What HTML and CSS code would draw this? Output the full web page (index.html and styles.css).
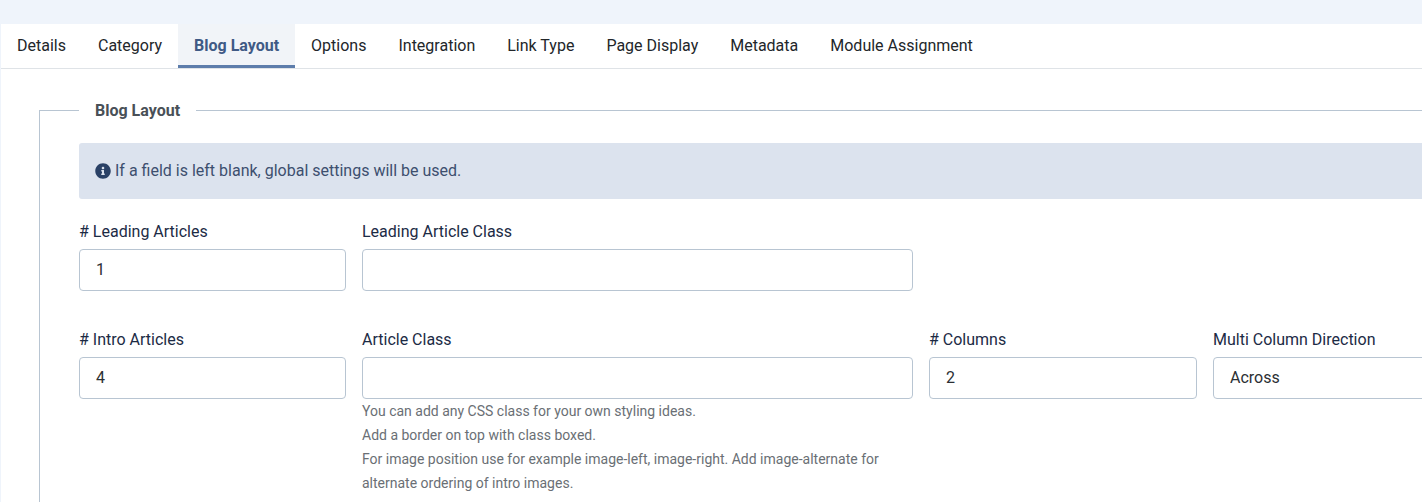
FILE: index.html
```html
<!DOCTYPE html>
<html lang="en">
<head>
<meta charset="utf-8">
<title>Blog Layout</title>
<link rel="stylesheet" href="styles.css">
</head>
<body>
<main class="card">
  <nav class="tabs">
    <a class="tab">Details</a>
    <a class="tab">Category</a>
    <a class="tab active">Blog Layout</a>
    <a class="tab">Options</a>
    <a class="tab">Integration</a>
    <a class="tab">Link Type</a>
    <a class="tab">Page Display</a>
    <a class="tab">Metadata</a>
    <a class="tab">Module Assignment</a>
  </nav>
  <div class="panel">
    <fieldset class="group">
      <legend class="legend">Blog Layout</legend>
      <div class="alert">
        <svg class="alert-icon" viewBox="0 0 512 512" aria-hidden="true"><path fill="currentColor" d="M256 8C119.043 8 8 119.083 8 256c0 136.997 111.043 248 248 248s248-111.003 248-248C504 119.083 392.957 8 256 8zm0 110c23.196 0 42 18.804 42 42s-18.804 42-42 42-42-18.804-42-42 18.804-42 42-42zm56 254c0 6.627-5.373 12-12 12h-88c-6.627 0-12-5.373-12-12v-24c0-6.627 5.373-12 12-12h12v-64h-12c-6.627 0-12-5.373-12-12v-24c0-6.627 5.373-12 12-12h64c6.627 0 12 5.373 12 12v100h12c6.627 0 12 5.373 12 12v24z"/></svg>
        <span>If a field is left blank, global settings will be used.</span>
      </div>
      <div class="row row-first">
        <div class="field">
          <label class="label"># Leading Articles</label>
          <input class="input" type="text" value="1">
        </div>
        <div class="field">
          <label class="label">Leading Article Class</label>
          <input class="input" type="text" value="">
        </div>
      </div>
      <div class="row">
        <div class="field">
          <label class="label"># Intro Articles</label>
          <input class="input" type="text" value="4">
        </div>
        <div class="field">
          <label class="label">Article Class</label>
          <input class="input" type="text" value="">
          <div class="help">You can add any CSS class for your own styling ideas.<br>Add a border on top with class boxed.<br>For image position use for example image-left, image-right. Add image-alternate for alternate ordering of intro images.</div>
        </div>
        <div class="field">
          <label class="label"># Columns</label>
          <input class="input" type="text" value="2">
        </div>
        <div class="field">
          <label class="label">Multi Column Direction</label>
          <input class="input" type="text" value="Across">
        </div>
      </div>
    </fieldset>
  </div>
</main>
</body>
</html>
```
FILE: styles.css
```css
* { box-sizing: border-box; }
html, body { height: 100%; }
body {
  margin: 0;
  overflow: hidden;
  background: #eff4fb;
  font-family: Roboto, "Liberation Sans", sans-serif;
  font-size: 16px;
  line-height: 24px;
  color: #1f2a3d;
}
.card {
  margin: 24px 0 0 1px;
  width: 1600px;
  height: 478px;
  overflow: hidden;
  background: #fff;
}
.tabs {
  display: flex;
  height: 45px;
  border-bottom: 1px solid #dfe3e7;
}
.tab {
  height: 44px;
  padding: 10px 16px 0;
  color: #22262a;
}
.tab.active {
  background: #f1f4f8;
  border-bottom: 3px solid #5d7dab;
  color: #3f5a85;
  font-weight: 700;
}
.panel { padding: 30px 0 0 38px; }
.group {
  margin: 0;
  padding: 21px 40px 0 39px;
  min-width: 0;
  min-height: 500px;
  border: 1px solid #b8c5d2;
  border-right: 0;
  border-bottom: 0;
}
.legend {
  height: 23px;
  padding: 0 16px;
  font-weight: 700;
  color: #495057;
}
.alert {
  display: flex;
  align-items: center;
  gap: 4px;
  height: 56px;
  padding: 0 16px;
  border-radius: 3px;
  background: #dce3ee;
  color: #3d4f6e;
}
.alert-icon { width: 16px; height: 16px; color: #2a4166; flex: none; }
.row {
  display: grid;
  grid-template-columns: 267px 551px 268px 267px;
  column-gap: 16px;
}
.row-first { margin-top: 20px; }
.row + .row { margin-top: 36px; }
.field { min-width: 0; }
.label {
  display: block;
  height: 24px;
  margin-bottom: 6px;
  padding-top: 1px;
  color: #1c2b45;
}
.input {
  display: block;
  width: 100%;
  height: 42px;
  padding: 0 16px 2px;
  border: 1px solid #b8c5d2;
  border-radius: 4px;
  background: #fff;
  font: inherit;
  color: #2b2f33;
  outline: 0;
}
.help {
  font-size: 14px;
  line-height: 24px;
  color: #6a6f75;
}
```
